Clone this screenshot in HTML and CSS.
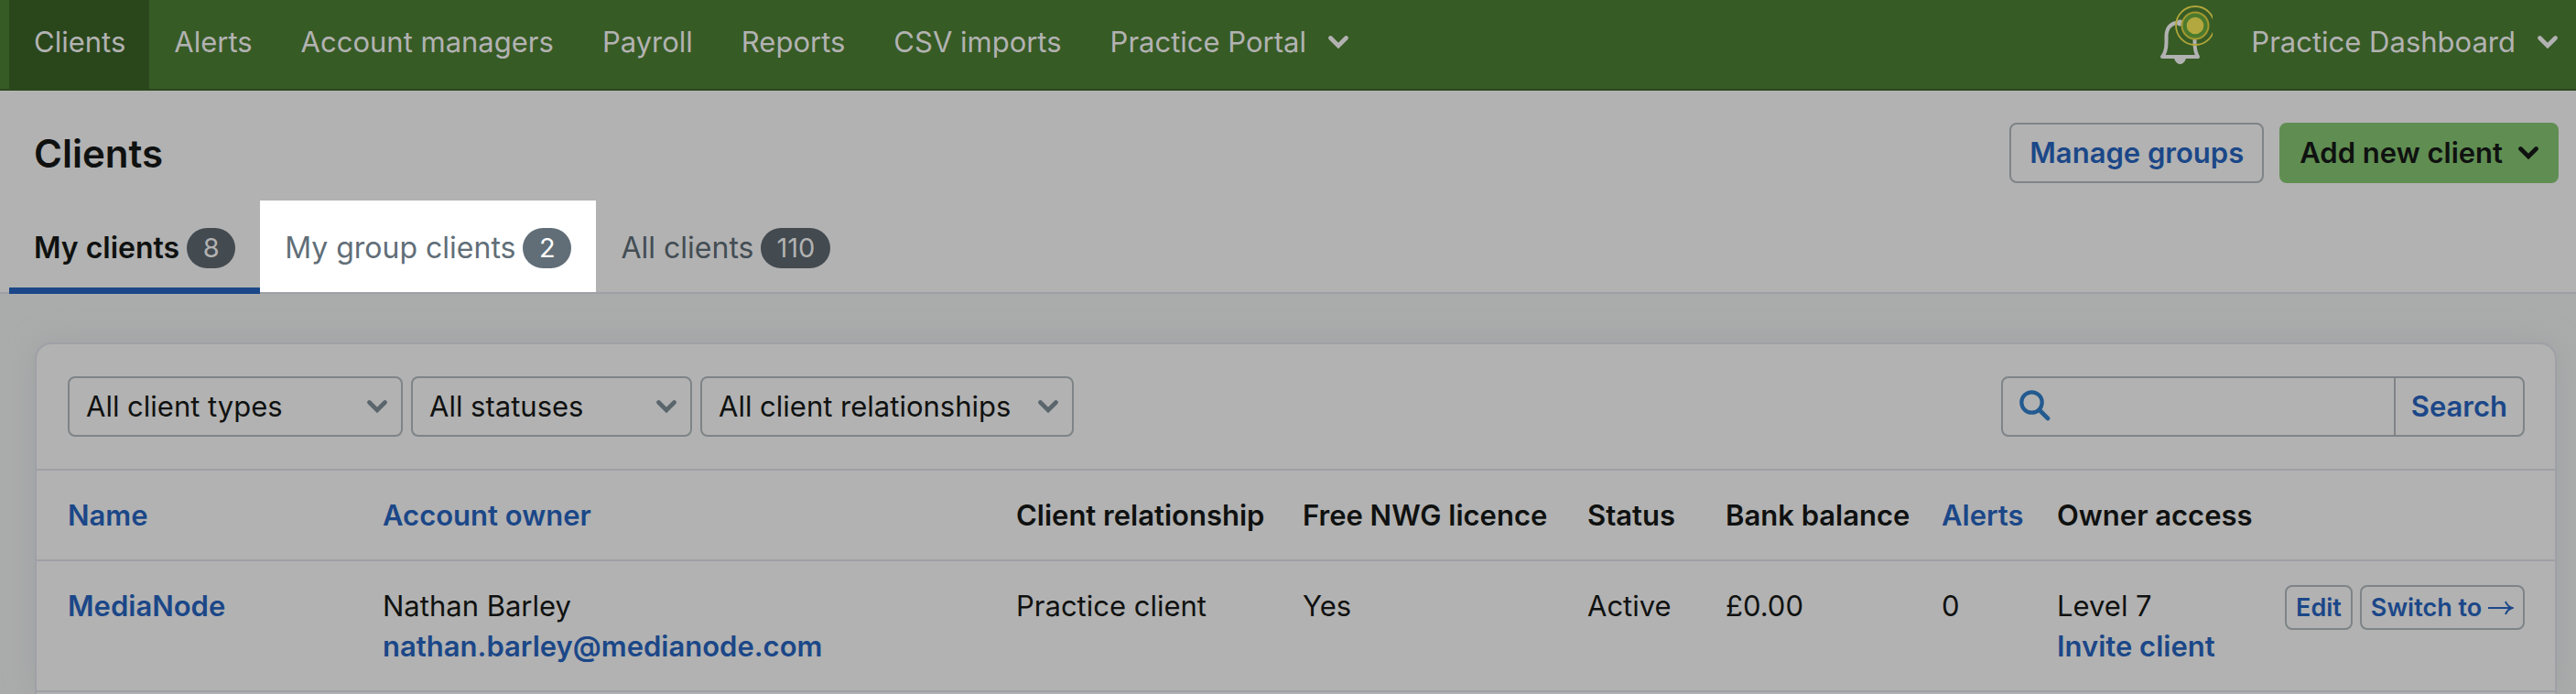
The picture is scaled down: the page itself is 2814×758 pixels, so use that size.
FILE: index.html
```html
<!DOCTYPE html>
<html lang="en">
<head>
<meta charset="utf-8">
<title>Clients</title>
<link rel="stylesheet" href="styles.css">
</head>
<body>
<svg class="defs" width="0" height="0" aria-hidden="true">
  <symbol id="chevron" viewBox="0 0 22 14"><path d="M2.500 2.500 L11 11 L19.500 2.500" fill="none" stroke="currentColor" stroke-width="4.600" stroke-linecap="round"/></symbol>
</svg>

<nav class="topbar">
  <div class="topbar-group">
    <a class="topbar-link is-active" href="#">Clients</a>
    <a class="topbar-link" href="#">Alerts</a>
    <a class="topbar-link" href="#">Account managers</a>
    <a class="topbar-link" href="#">Payroll</a>
    <a class="topbar-link" href="#">Reports</a>
    <a class="topbar-link" href="#">CSV imports</a>
    <button class="topbar-link" type="button">Practice Portal<svg class="chevron"><use href="#chevron"/></svg></button>
  </div>
  <div class="topbar-group topbar-end">
    <button class="bell" type="button" aria-label="Notifications">
      <svg width="62" height="70" viewBox="0 0 62 70">
        <path d="M7 62 C10.500 58 11.500 52 11.500 46 V40 C11.500 29 17 24.500 27 24.500 C37 24.500 42.500 29 42.500 40 V46 C42.500 52 43.500 58 46 62 Z" fill="none" stroke="#b2b2b2" stroke-width="4" stroke-linejoin="round"/>
        <circle cx="26.500" cy="25" r="3.500" fill="#b2b2b2"/>
        <path d="M20 64 C21.500 68 24 70 26.500 70 C29 70 31.500 68 33 64 Z" fill="#b2b2b2"/>
        <circle cx="43" cy="28" r="14.500" fill="#4b7a2c" stroke="#a3982f" stroke-width="2"/>
        <circle cx="43" cy="28" r="21" fill="none" stroke="#b0a63b" stroke-width="1.800"/>
        <circle cx="43" cy="28" r="9.300" fill="#b3a840"/>
      </svg>
    </button>
    <button class="topbar-link" type="button">Practice Dashboard<svg class="chevron"><use href="#chevron"/></svg></button>
  </div>
</nav>

<header class="page-head">
  <div class="title-row">
    <h1 class="title">Clients</h1>
    <div class="actions">
      <button class="btn btn-outline" type="button">Manage groups</button>
      <button class="btn btn-primary" type="button">Add new client<svg class="chevron"><use href="#chevron"/></svg></button>
    </div>
  </div>
  <nav class="tabs">
    <a class="tab is-current" href="#">My clients<span class="count">8</span></a>
    <a class="tab is-spotlit" href="#">My group clients<span class="count">2</span></a>
    <a class="tab" href="#">All clients<span class="count">110</span></a>
  </nav>
</header>

<main class="content">
  <section class="card">
    <form class="filters">
      <div class="select select-types"><select aria-label="Client type"><option>All client types</option></select><svg class="chevron"><use href="#chevron"/></svg></div>
      <div class="select select-status"><select aria-label="Status"><option>All statuses</option></select><svg class="chevron"><use href="#chevron"/></svg></div>
      <div class="select select-relation"><select aria-label="Client relationship"><option>All client relationships</option></select><svg class="chevron"><use href="#chevron"/></svg></div>
      <div class="search">
        <svg class="search-icon" width="34" height="34" viewBox="0 0 34 34" fill="none" stroke="currentColor"><circle cx="13.500" cy="13.500" r="11.200" stroke-width="4.200"/><path d="M22 22 L31 31" stroke-width="4.600" stroke-linecap="round"/></svg>
        <input class="search-input" type="text" aria-label="Search clients">
        <button class="search-btn" type="submit">Search</button>
      </div>
    </form>
    <table class="clients">
      <colgroup>
        <col class="c-name"><col><col class="c-relation"><col class="c-licence"><col class="c-status"><col class="c-balance"><col class="c-alerts"><col class="c-access"><col class="c-actions">
      </colgroup>
      <thead>
        <tr>
          <th><a href="#">Name</a></th>
          <th><a href="#">Account owner</a></th>
          <th>Client relationship</th>
          <th>Free NWG licence</th>
          <th>Status</th>
          <th>Bank balance</th>
          <th><a href="#">Alerts</a></th>
          <th>Owner access</th>
          <th></th>
        </tr>
      </thead>
      <tbody>
        <tr>
          <td><a href="#">MediaNode</a></td>
          <td>Nathan Barley<br><a href="#">nathan.barley@medianode.com</a></td>
          <td>Practice client</td>
          <td>Yes</td>
          <td>Active</td>
          <td>£0.00</td>
          <td>0</td>
          <td>Level 7<br><a href="#">Invite client</a></td>
          <td class="row-actions"><div class="row-buttons"><button class="btn-small" type="button">Edit</button><button class="btn-small" type="button">Switch to <svg width="28" height="18" viewBox="0 0 28 18" fill="none" stroke="currentColor" stroke-width="2"><path d="M0 9 H26 M19 2 C20.500 6 23 8 26.500 9 C23 10 20.500 12 19 16"/></svg></button></div></td>
        </tr>
      </tbody>
    </table>
  </section>
</main>
</body>
</html>
```
FILE: styles.css
```css
* { box-sizing: border-box; }

html, body { height: 100%; }

body {
  margin: 0;
  display: flex;
  flex-direction: column;
  background: #aaacab;
  color: #0f1110;
  font-family: Inter, "Liberation Sans", sans-serif;
  font-size: 31px;
  line-height: 44px;
  overflow: hidden;
}

button, select, input { font: inherit; color: inherit; }
button { background: none; border: 0; padding: 0; white-space: nowrap; }
a { color: #1b4788; text-decoration: none; }

.defs { position: absolute; }
.chevron { width: 22px; height: 14px; flex: none; }

.topbar {
  display: flex;
  justify-content: space-between;
  padding: 0 10px;
  background: #375b25;
  border-bottom: 2px solid #2a471c;
}
.topbar-group { display: flex; }
.topbar-link {
  display: flex;
  align-items: center;
  gap: 24px;
  height: 97px;
  padding: 0 26px 6px 27px;
  color: #b2b2b2;
  white-space: nowrap;
}
.topbar-link.is-active { background: #2a471c; }
.topbar-end .topbar-link { padding-right: 10px; }
.bell { display: flex; padding-right: 15px; }

.page-head {
  background: #b2b2b2;
  border-bottom: 2px solid #9fa0a6;
}
.title-row {
  display: flex;
  justify-content: space-between;
  padding: 35px 19px 17px 37px;
}
.title {
  margin: 0;
  font-size: 42px;
  line-height: 68px;
  font-weight: 600;
}
.actions { display: flex; gap: 17px; }
.btn {
  display: flex;
  align-items: center;
  height: 66px;
  padding: 0 20px;
  border: 2px solid #7e8487;
  border-radius: 8px;
  font-weight: 600;
}
.btn-outline { color: #1b4788; }
.btn-primary {
  gap: 17px;
  background: #608e52;
  border-color: #608e52;
}

.tabs { display: flex; padding-left: 10px; margin-bottom: -2px; }
.tab {
  display: flex;
  align-items: center;
  gap: 8px;
  height: 102px;
  padding: 8px 27px 0;
  border-bottom: 7px solid transparent;
  font-size: 32px;
  color: #434d54;
  white-space: nowrap;
}
.tab.is-current {
  color: #0f1110;
  font-weight: 600;
  border-bottom-color: #1b4788;
}
.tab.is-spotlit {
  height: 100px;
  border-bottom-width: 5px;
  background: #fff;
  color: #616e78;
}
.count {
  min-width: 53px;
  height: 44px;
  padding: 0 17px;
  border-radius: 22px;
  background: #434a50;
  color: #b2b2b2;
  font-size: 29px;
  font-weight: 400;
  text-align: center;
}
.is-spotlit .count { background: #616e78; color: #fff; }

.content { flex: 1; padding: 53px 21px 0 38px; }
.card {
  min-height: 100%;
  background: #b2b2b2;
  border: 2px solid #9fa0a6;
  border-bottom: 0;
  border-radius: 18px 18px 0 0;
  box-shadow: 0 0 32px #9fa2a4;
}
.filters {
  display: flex;
  gap: 9px;
  padding: 35px 33px 35px 34px;
  border-bottom: 2px solid #9fa0a6;
}
.select { display: grid; align-items: center; }
.select > * { grid-area: 1 / 1; }
.select select {
  appearance: none;
  width: 100%;
  height: 66px;
  padding: 0 18px;
  border: 2px solid #7e8487;
  border-radius: 8px;
  background: transparent;
}
.select .chevron {
  justify-self: end;
  margin-right: 17px;
  color: #5a656c;
  pointer-events: none;
}
.select-types { width: 366px; }
.select-status { width: 307px; }
.select-relation { width: 408px; }

.search {
  display: flex;
  width: 572px;
  height: 66px;
  margin-left: auto;
  border: 2px solid #7e8487;
  border-radius: 8px;
}
.search-icon { margin: 13px 8px 0 18px; color: #235b90; flex: none; }
.search-input {
  flex: 1;
  min-width: 0;
  border: 0;
  background: transparent;
  outline: 0;
}
.search-btn {
  padding: 0 17px;
  border-left: 2px solid #7e8487;
  color: #1b4788;
  font-weight: 600;
}

.clients {
  width: 100%;
  table-layout: fixed;
  border-collapse: separate;
  border-spacing: 0;
}
.c-name { width: 344px; }
.c-relation { width: 313px; }
.c-licence { width: 311px; }
.c-status { width: 151px; }
.c-balance { width: 236px; }
.c-alerts { width: 126px; }
.c-access { width: 235px; }
.c-actions { width: 343px; }
.clients th, .clients td {
  padding: 27px 0 26px 34px;
  border-bottom: 2px solid #9fa0a6;
  text-align: left;
  vertical-align: top;
  white-space: nowrap;
}
.clients th { font-weight: 600; }
.clients td a { font-weight: 600; }
.clients .row-actions { padding: 26px 33px 0 0; }
.row-buttons { display: flex; justify-content: flex-end; gap: 8px; }
.btn-small {
  height: 49px;
  padding: 0 10px;
  border: 2px solid #7e8487;
  border-radius: 8px;
  color: #1b4788;
  font-size: 27px;
  font-weight: 600;
}
```
